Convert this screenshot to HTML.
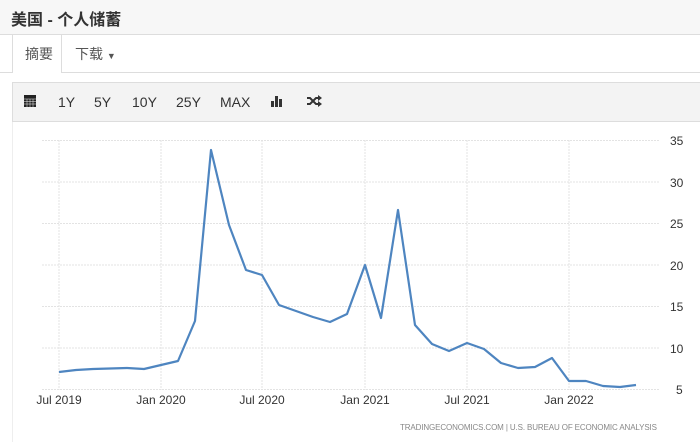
<!DOCTYPE html>
<html><head><meta charset="utf-8"><style>
body{margin:0;width:700px;height:442px;overflow:hidden;background:#fff;font-family:"Liberation Sans","Noto Sans CJK SC",sans-serif;position:relative}
.hdr{position:absolute;left:0;top:0;width:700px;height:34px;background:#f7f7f7;border-bottom:1px solid #ddd}
.hdr span{position:absolute;left:11px;top:6px;font-size:16px;font-weight:bold;color:#333}
.tab{position:absolute;font-size:14px;color:#555}
.tb{position:absolute;left:12px;top:82px;width:700px;height:38px;background:#f3f3f3;border:1px solid #ddd}
.tb span{position:absolute;top:11px;font-size:14px;color:#333}
</style></head><body>
<div class="hdr"><span>美国 - 个人储蓄</span></div>
<div style="position:absolute;left:0;top:72px;width:700px;height:1px;background:#ddd"></div>
<div style="position:absolute;left:12px;top:35px;width:48px;height:38px;background:#fff;border-left:1px solid #ddd;border-right:1px solid #ddd"></div>
<div class="tab" style="left:25px;top:44px">摘要</div>
<div class="tab" style="left:75px;top:44px">下载 <span style="font-size:9px">▼</span></div>
<div style="position:absolute;left:12px;top:121px;width:1px;height:321px;background:#eee"></div>
<div class="tb">
<svg style="position:absolute;left:10px;top:11px" width="14" height="14" viewBox="0 0 14 14"><rect x="1" y="1" width="12" height="12" fill="#222"/><path d="M1 5h12M1 7.5h12M1 10h12M4 5v8M7 5v8M10 5v8" stroke="#f3f3f3" stroke-width=".5"/></svg>
<span style="left:45px">1Y</span><span style="left:81px">5Y</span><span style="left:119px">10Y</span><span style="left:163px">25Y</span><span style="left:207px">MAX</span>
<svg style="position:absolute;left:257px;top:12px" width="14" height="12"><rect x="1" y="6" width="3" height="6" fill="#333"/><rect x="5" y="1" width="3" height="11" fill="#333"/><rect x="9" y="4" width="3" height="8" fill="#333"/></svg>
<svg style="position:absolute;left:293px;top:12px" width="16" height="12" viewBox="0 0 16 12"><path d="M1 3h3l6 6h3M1 9h3l6-6h3" stroke="#333" stroke-width="2" fill="none"/><path d="M12 0l4 3-4 3zM12 6l4 3-4 3z" fill="#333"/></svg>
</div>
<svg style="position:absolute;left:0;top:0" width="700" height="442">
<g stroke="#e3e3e3" stroke-dasharray="2,1" stroke-width="1">
<path d="M42 140.5H660M42 182H660M42 223.5H660M42 265H660M42 306.5H660M42 348H660M42 389.5H660"/>
<path d="M59 140V390M161 140V390M262 140V390M365 140V390M467 140V390M569 140V390"/>
</g>
<polyline fill="none" stroke="#4e85c0" stroke-width="2.2" stroke-linejoin="round" points="59,372 76,370 93,369 110,368.5 127,368 144,369 161,365 178,361 195,321 211,150 229,225 246,270 262,275 279,305 296,311 313,317 330,322 347,314 365,265 381,318 398,210 415,325 432,344 449,351 467,343 484,349 501,363 518,368 535,367 552,358 569,381 586,381 603,386 620,387 636,385"/>
<g font-size="12" fill="#333" font-family="Liberation Sans">
<text x="670" y="145">35</text><text x="670" y="187">30</text><text x="670" y="228">25</text><text x="670" y="270">20</text><text x="670" y="311">15</text><text x="670" y="353">10</text><text x="676" y="394">5</text>
<g text-anchor="middle"><text x="59" y="404">Jul 2019</text><text x="161" y="404">Jan 2020</text><text x="262" y="404">Jul 2020</text><text x="365" y="404">Jan 2021</text><text x="467" y="404">Jul 2021</text><text x="569" y="404">Jan 2022</text></g>
</g>
<text x="400" y="430" font-size="8" fill="#888" textLength="257" lengthAdjust="spacing" font-family="Liberation Sans">TRADINGECONOMICS.COM  |  U.S. BUREAU OF ECONOMIC ANALYSIS</text>
</svg>
</body></html>
